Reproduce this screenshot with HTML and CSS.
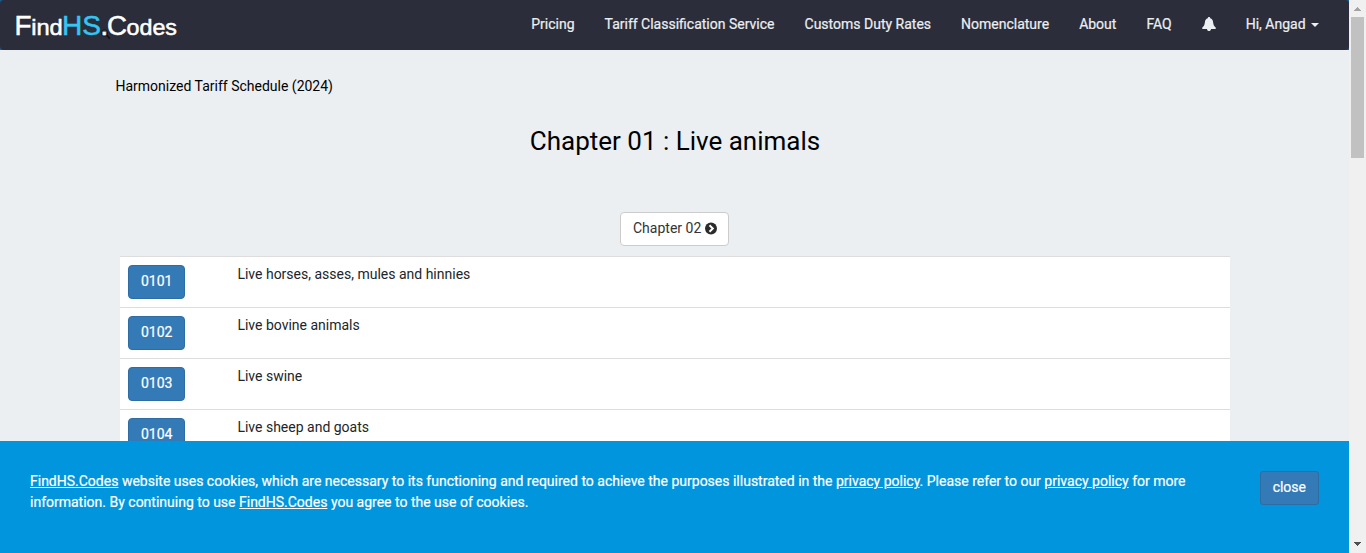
FILE: index.html
```html
<!DOCTYPE html>
<html lang="en">
<head>
<meta charset="utf-8">
<title>Chapter 01 : Live animals</title>
<link rel="stylesheet" href="styles.css">
</head>
<body>
<div class="viewport">
  <div class="page">
    <div class="navwrap">
      <header class="navbar">
        <a class="brand">
          <svg width="170" height="34" viewBox="0 0 170 34">
            <g class="logo-text">
              <text x="3.5" y="26.3" font-size="27" textLength="17" lengthAdjust="spacingAndGlyphs">F</text>
              <text x="20.2" y="26.3" font-size="21.5" textLength="31.6" lengthAdjust="spacingAndGlyphs">ind</text>
              <text class="logo-accent" x="51" y="26.3" font-size="27" textLength="39" lengthAdjust="spacingAndGlyphs">HS</text>
              <circle class="lens" cx="93.500" cy="24" r="3.2"/>
              <path class="handle" d="M95.700 26.4l3.2 3.4"/>
              <text x="89.5" y="26.3" font-size="27">.</text>
              <text x="96" y="26.3" font-size="27" textLength="20" lengthAdjust="spacingAndGlyphs">C</text>
              <text x="115.5" y="26.3" font-size="21.5" textLength="50.500" lengthAdjust="spacingAndGlyphs">odes</text>
            </g>
          </svg>
        </a>
        <nav class="menu">
          <a>Pricing</a>
          <a>Tariff Classification Service</a>
          <a>Customs Duty Rates</a>
          <a>Nomenclature</a>
          <a>About</a>
          <a>FAQ</a>
          <a class="bell"><svg width="14" height="14" viewBox="0 0 14 14"><path d="M7 0c.7 0 1.2.5 1.2 1.1v.2c1.9.5 2.7 2 2.9 3.9.3 2.6 1 4.1 2.6 5.3V12H.3v-1.5C1.9 9.3 2.6 7.8 2.9 5.2 3.1 3.3 3.9 1.8 5.8 1.3v-.2C5.8.5 6.3 0 7 0zM5 12h4C8.9 13.4 8.1 14 7 14s-1.9-.6-2-2z"/></svg></a>
          <a class="user">Hi, Angad <span class="caret"></span></a>
        </nav>
      </header>
    </div>
    <main class="content">
      <p class="crumb">Harmonized Tariff Schedule (2024)</p>
      <h1>Chapter 01 : Live animals</h1>
      <a class="next">Chapter 02 <svg width="12" height="13" viewBox="0 0 12 13"><circle cx="6" cy="6.5" r="6"/><path d="M4.5 3.2l3.3 3.3-3.3 3.3"/></svg></a>
      <div class="rows">
        <div class="row"><a class="btn">0101</a><span>Live horses, asses, mules and hinnies</span></div>
        <div class="row"><a class="btn">0102</a><span>Live bovine animals</span></div>
        <div class="row"><a class="btn">0103</a><span>Live swine</span></div>
        <div class="row"><a class="btn">0104</a><span>Live sheep and goats</span></div>
      </div>
    </main>
    <aside class="cookies">
      <p><a>FindHS.Codes</a> website uses cookies, which are necessary to its functioning and required to achieve the purposes illustrated in the <a>privacy policy</a>. Please refer to our <a>privacy policy</a> for more<br>information. By continuing to use <a>FindHS.Codes</a> you agree to the use of cookies.</p>
      <button class="btn close">close</button>
    </aside>
  </div>
  <div class="scrollbar">
    <svg width="7" height="4" viewBox="0 0 7 4" shape-rendering="crispEdges"><path fill="#a3a3a3" d="M3 0h1v1h1v1h1v1h1v1H0V3h1V2h1V1h1z"/></svg>
    <div class="thumb"></div>
    <svg class="down" width="7" height="4" viewBox="0 0 7 4" shape-rendering="crispEdges"><path fill="#505050" d="M0 0h7v1H6v1H5v1H4v1H3V3H2V2H1V1H0z"/></svg>
  </div>
</div>
</body>
</html>
```
FILE: styles.css
```css
* { box-sizing: border-box; }
body {
  margin: 0;
  overflow: hidden;
  font: 400 14px/20px Roboto, sans-serif;
  color: #212529;
}
.viewport {
  display: grid;
  grid-template-columns: 1fr 17px;
  height: 553px;
  background: #ebeff2;
}
.page {
  position: relative;
  height: 553px;
  overflow: hidden;
}
.navwrap { background: #1b5b94; }
.navbar {
  display: flex;
  justify-content: space-between;
  height: 50px;
  padding: 0 15px 0 11px;
  background: #2b2d3a;
  border-radius: 4px;
}
.brand { padding-top: 9px; }
.brand svg { display: block; }
.logo-text {
  font-family: "Liberation Sans", Arial, sans-serif;
  fill: #fff;
  stroke: #fff;
  stroke-width: .5;
}
.logo-text .logo-accent { fill: #35c5f4; stroke: #35c5f4; }
.lens { fill: #444; stroke: #111; stroke-width: .8; }
.handle { stroke: #111; stroke-width: 1.6; }
.menu { display: flex; }
.menu a {
  padding: 14px 15px;
  color: #ebeff2;
  -webkit-text-stroke: .2px;
  white-space: nowrap;
}
.menu .bell { padding-top: 17px; }
.bell svg { display: block; fill: #ebeff2; }
.caret {
  display: inline-block;
  margin-left: 2px;
  vertical-align: middle;
  border: 4px solid transparent;
  border-top-color: #ebeff2;
  border-bottom: 0;
}
.content {
  display: flex;
  flex-direction: column;
  align-items: center;
  padding: 26px 119px 0 120px;
}
.crumb {
  align-self: flex-start;
  margin: 0 0 0 -4.5px;
  color: #000;
}
h1 {
  margin: 30px 0 0;
  font-size: 26px;
  line-height: 30px;
  font-weight: 400;
  color: #000;
}
.next {
  width: 109px;
  height: 34px;
  margin: 56px 1px 0 0;
  padding: 5px 0 7px 12px;
  border: 1px solid #ccc;
  border-radius: 4px;
  background: #fff;
  color: #333;
  white-space: nowrap;
}
.next svg { vertical-align: -2px; }
.next circle { fill: #2b2b2b; }
.next path { fill: none; stroke: #fff; stroke-width: 2; }
.rows {
  width: 100%;
  margin-top: 10px;
  background: #fff;
}
.row {
  display: grid;
  grid-template-columns: 109px 1fr;
  height: 51px;
  padding: 8px;
  border-top: 1px solid #ddd;
}
.row span {
  margin-top: -1px;
  padding-left: .4px;
}
.btn {
  justify-self: start;
  height: 34px;
  padding: 5px 12px 7px;
  border: 1px solid #2e6da4;
  border-radius: 4px;
  background: #337ab7;
  color: #fff;
  font: 400 14px/20px Roboto, sans-serif;
  -webkit-text-stroke: .2px;
}
.cookies {
  position: absolute;
  inset: 441px 0 0;
  display: flex;
  justify-content: space-between;
  align-items: flex-start;
  padding: 30px;
  background: #0095dd;
  color: #fff;
  -webkit-text-stroke: .2px;
}
.cookies p { margin: 0; line-height: 21px; }
.cookies p a { text-decoration: underline; }
.close { border-radius: 3px; }
.scrollbar {
  display: flex;
  flex-direction: column;
  align-items: center;
  padding: 7px 0;
  background: #f0f0f0;
}
.thumb {
  width: 13px;
  height: 141px;
  margin-top: 6px;
  background: #c1c1c1;
}
.down { margin-top: auto; }
```
